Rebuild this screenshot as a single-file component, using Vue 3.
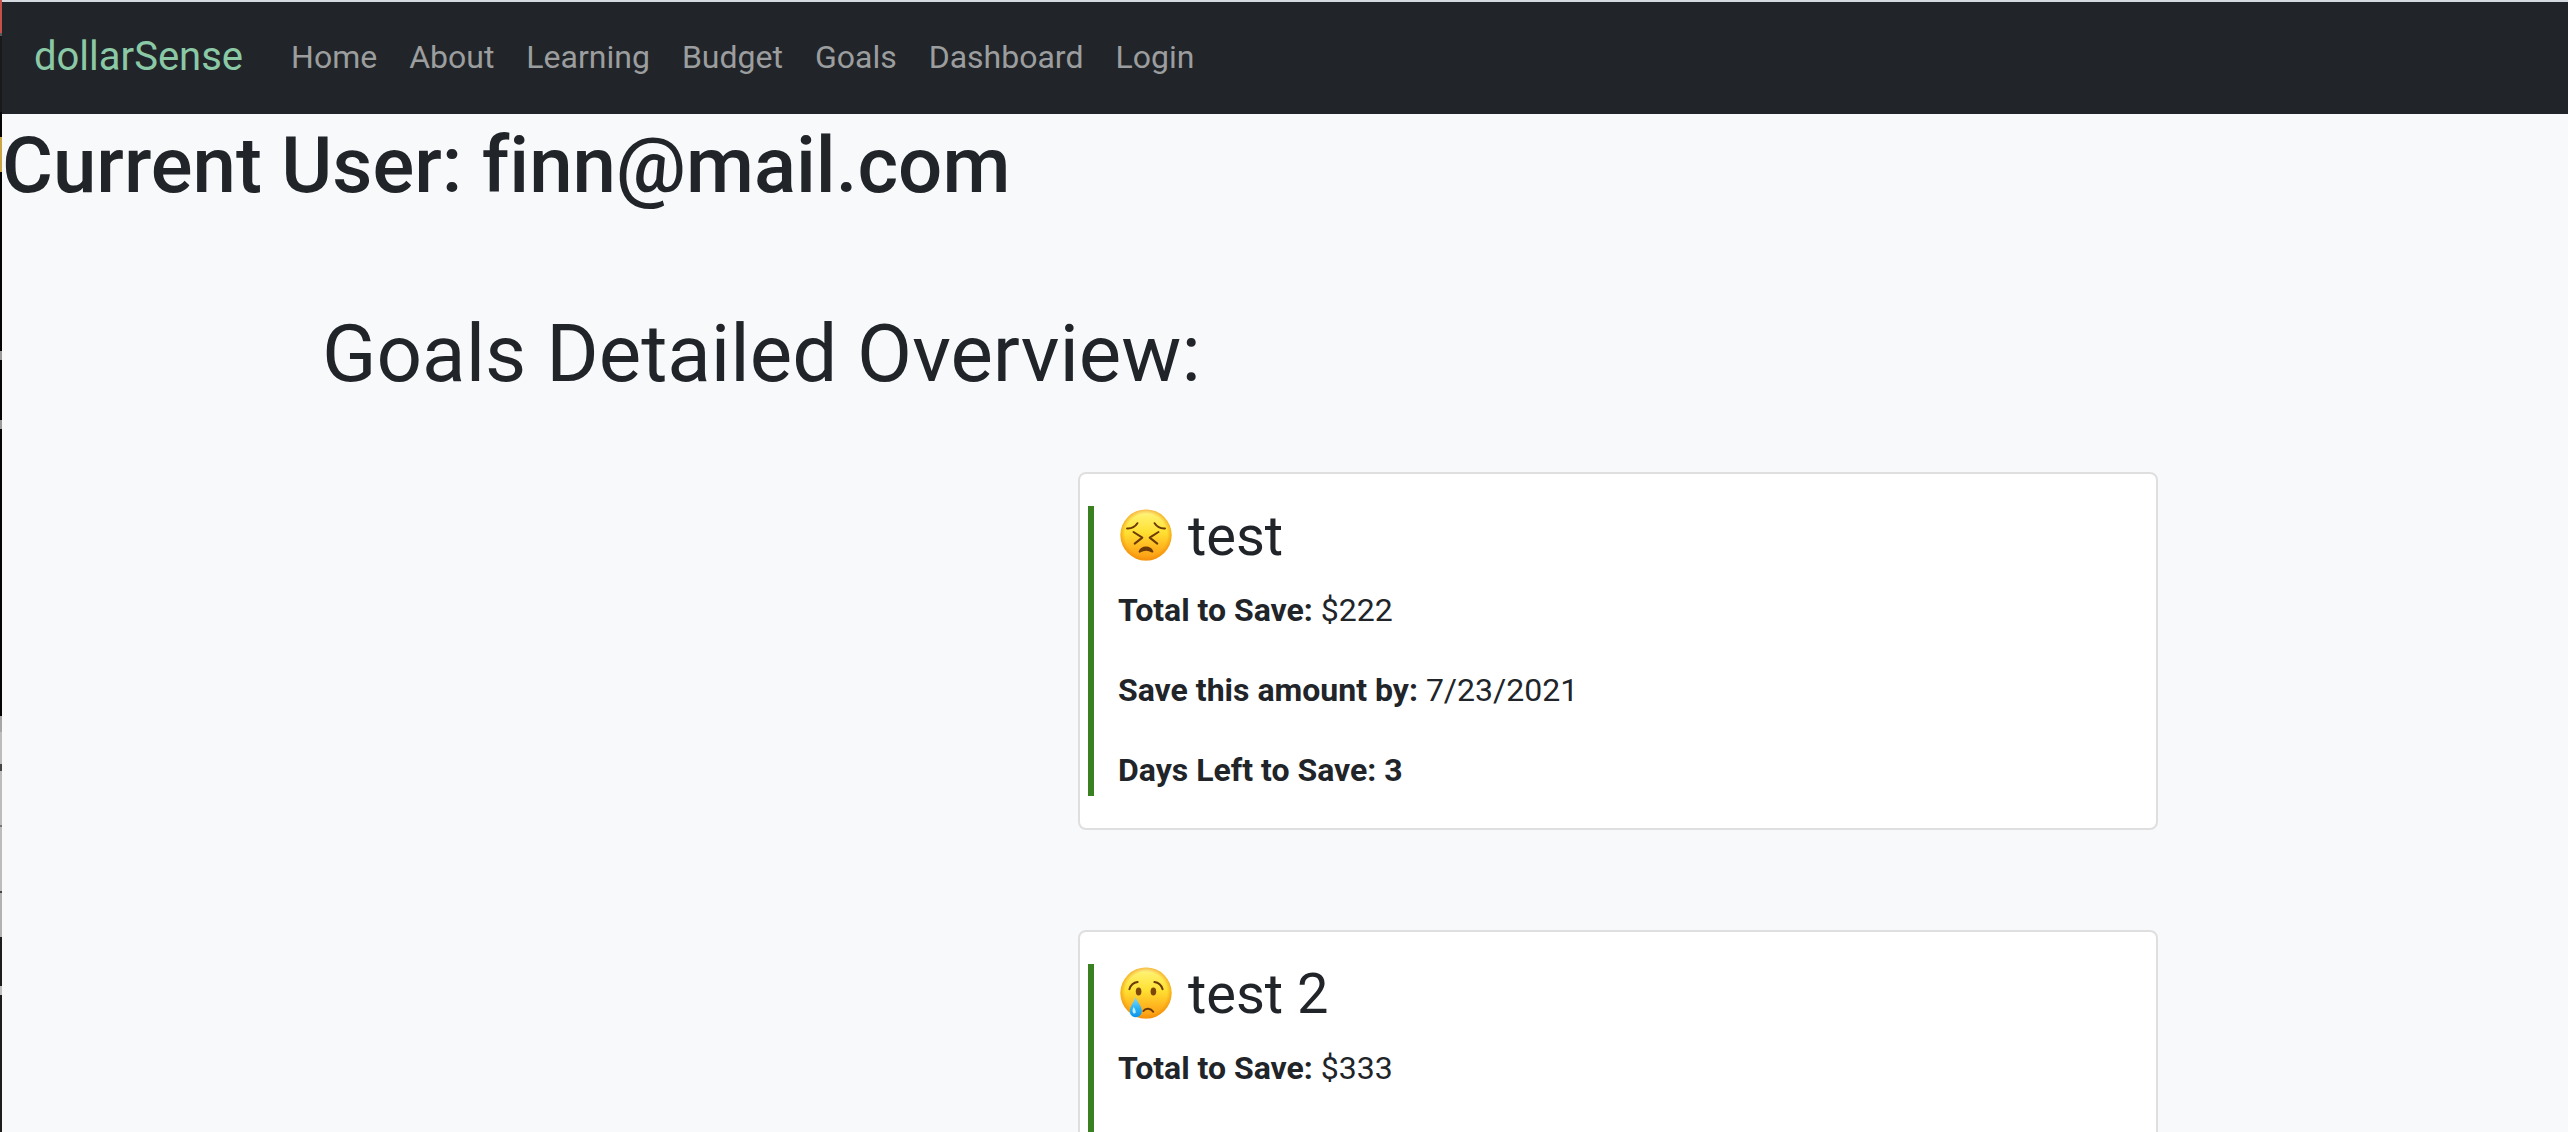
<script setup>
const links = ['Home', 'About', 'Learning', 'Budget', 'Goals', 'Dashboard', 'Login']

const goals = [
  { id: 1, mood: 'strained', name: 'test', total: '$222', date: '7/23/2021', days: '3' },
  { id: 2, mood: 'crying', name: 'test 2', total: '$333' },
]
</script>

<template>
  <div class="screen">
    <div class="edge" aria-hidden="true"></div>
    <div class="page">
      <nav class="navbar">
        <a class="brand" href="#">dollarSense</a>
        <ul class="links">
          <li v-for="link in links" :key="link"><a href="#">{{ link }}</a></li>
        </ul>
      </nav>

      <main>
        <h1 class="user">Current User: finn@mail.com</h1>
        <h1 class="overview">Goals Detailed Overview:</h1>

        <div class="goals">
          <section v-for="goal in goals" :key="goal.id" class="card">
            <div class="detail">
              <h3>
                <svg class="face" viewBox="0 0 56 56" aria-hidden="true">
                  <defs>
                    <linearGradient :id="'skin' + goal.id" x1="0" y1="0" x2="0" y2="1">
                      <stop offset="0" stop-color="#fff9a0" />
                      <stop offset="0.12" stop-color="#fff06a" />
                      <stop offset="0.45" stop-color="#ffe032" />
                      <stop offset="0.75" stop-color="#ffb51f" />
                      <stop offset="1" stop-color="#fb9a12" />
                    </linearGradient>
                    <radialGradient :id="'rim' + goal.id">
                      <stop offset="0.82" stop-color="#f08c00" stop-opacity="0" />
                      <stop offset="1" stop-color="#ee8a08" stop-opacity="0.6" />
                    </radialGradient>
                    <linearGradient :id="'tear' + goal.id" x1="0" y1="0" x2="0" y2="1">
                      <stop offset="0" stop-color="#8adcfa" />
                      <stop offset="0.55" stop-color="#2eb4f4" />
                      <stop offset="1" stop-color="#0a93ea" />
                    </linearGradient>
                  </defs>
                  <circle cx="28" cy="28" r="25.6" :fill="`url(#skin${goal.id})`" />
                  <circle cx="28" cy="28" r="25.6" :fill="`url(#rim${goal.id})`" />
                  <g v-if="goal.mood === 'strained'" fill="none" stroke="#6b3a06" stroke-width="2" stroke-linecap="round" stroke-linejoin="round">
                    <path d="M9 21.4c4 .3 8-1.6 10.4-5.2M47 21.4c-4 .3-8-1.6-10.4-5.2" />
                    <path d="M15.5 25l8.8 5.6-7.6 6M40.5 25l-8.8 5.6 7.6 6" />
                    <path d="M21.6 44.6c2.5-5.4 10.3-5.4 12.8 0-3.9-2.2-8.9-2.2-12.8 0z" fill="#6b3a06" />
                  </g>
                  <template v-else>
                    <g fill="none" stroke="#6b3a06" stroke-width="2" stroke-linecap="round">
                      <path d="M11.4 24.2c1.2-4.2 4.2-6.7 8.2-7.2M44.6 24.2c-1.2-4.2-4.2-6.7-8.2-7.2" />
                      <path d="M25.4 46c2.2-3.3 7.4-3 9.8.7" />
                    </g>
                    <ellipse cx="20.6" cy="26.6" rx="2.8" ry="4" fill="#7c4708" />
                    <ellipse cx="35.4" cy="26.6" rx="2.8" ry="4" fill="#7c4708" />
                    <path d="M17.6 31.8c1.2 4.6 6.2 9.2 6.2 14.4 0 3.6-2.800 6-6 6-3.4 0-6-2.4-6-6 0-5.200 4.800-9.800 5.800-14.400z" :fill="`url(#tear${goal.id})`" />
                    <path d="M15.6 42c-1.8 3.4-1.2 6.4 1 6.6 2-.2 1-4.2-1-6.6z" fill="#bdeeff" />
                  </template>
                </svg>
                {{ goal.name }}
              </h3>
              <p><strong>Total to Save:</strong> {{ goal.total }}</p>
              <p v-if="goal.date"><strong>Save this amount by:</strong> {{ goal.date }}</p>
              <p v-if="goal.days"><strong>Days Left to Save: {{ goal.days }}</strong></p>
            </div>
          </section>
        </div>
      </main>
    </div>
  </div>
</template>

<style>
html {
  height: 100%;
  overflow: hidden;
}
body {
  margin: 0;
  background: #f8f9fb;
}
body,
#app {
  height: 100%;
}
</style>

<style scoped>
.screen {
  display: flex;
  height: 100%;
  overflow: hidden;
  color: #212529;
  font-family: Roboto, "Liberation Sans", sans-serif;
  font-size: 32px;
  line-height: 48px;
}
/* Sliver of the desktop visible beside the window */
.edge {
  flex: 0 0 2px;
  background: linear-gradient(
    #c4524a 0 33px, #55585a 33px 36px, #17191a 36px 112px, #050506 112px 137px,
    #c9a546 137px 172px, #050506 172px 351px, #9a9a9a 351px 360px,
    #050506 360px 420px, #9a9a9a 420px 429px, #050506 429px 716px,
    #a6a6a6 716px 732px, #bcbcbc 732px 764px, #444444 764px 771px,
    #bcbcbc 771px 825px, #777777 825px 827px, #bcbcbc 827px 891px,
    #444444 891px 893px, #b2b2b2 893px 937px, #1d1d1d 937px 986px,
    #c0c0c0 986px 995px, #1d1d1d 995px
  );
}
.page {
  flex: 1;
  min-width: 0;
  border-top: 2px solid #d5dae0;
  background: #f8f9fb;
}
.navbar {
  display: flex;
  align-items: center;
  gap: 48px;
  padding: 25px 32px 27px;
  background: #212529;
}
.brand {
  color: #8bc9a6;
  font-size: 40px;
  line-height: 60px;
  text-decoration: none;
}
.links {
  display: flex;
  gap: 32px;
  margin: 0;
  padding: 0;
  list-style: none;
}
.links a {
  color: #9b9d9e;
  text-decoration: none;
}
h1 {
  margin: 0;
  font-size: 80px;
  line-height: 96px;
}
.user {
  padding-top: 4px;
  font-size: 78px;
  font-weight: 500;
  font-variant-ligatures: none;
}
.overview {
  margin-top: 92px;
  padding-left: 320px;
  font-weight: 400;
}
.goals {
  display: grid;
  grid-template-columns: 1076fr 1080fr 410fr;
  row-gap: 100px;
  margin-top: 70px;
  padding-bottom: 100px;
}
.card {
  grid-column: 2;
  padding: 32px 8px;
  border: 2px solid #dfdfdf;
  border-radius: 8px;
  background: #ffffff;
}
.detail {
  box-sizing: border-box;
  min-height: 290px;
  padding-left: 24px;
  border-left: 6px solid #398020;
}
h3 {
  margin: 0 0 20px;
  font-size: 56px;
  font-weight: 400;
  line-height: 60px;
}
.face {
  width: 56px;
  height: 56px;
  vertical-align: -8px;
}
p {
  margin: 0;
}
p + p {
  margin-top: 32px;
}
</style>
